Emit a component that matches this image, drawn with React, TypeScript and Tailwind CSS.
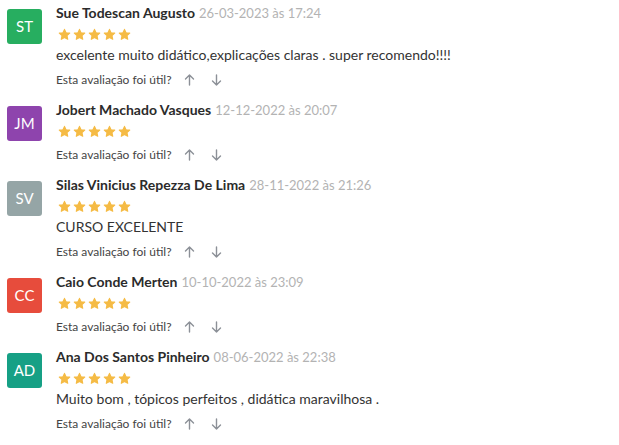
import React from 'react'

interface Review {
  initials: string
  color: string
  name: string
  date: string
  comment?: string
}

const reviews: Review[] = [
  { initials: 'ST', color: 'bg-[#27ae60]', name: 'Sue Todescan Augusto', date: '26-03-2023 às 17:24', comment: 'excelente muito didático,explicações claras . super recomendo!!!!' },
  { initials: 'JM', color: 'bg-[#8e44ad]', name: 'Jobert Machado Vasques', date: '12-12-2022 às 20:07' },
  { initials: 'SV', color: 'bg-[#95a5a6]', name: 'Silas Vinicius Repezza De Lima', date: '28-11-2022 às 21:26', comment: 'CURSO EXCELENTE' },
  { initials: 'CC', color: 'bg-[#e74c3c]', name: 'Caio Conde Merten', date: '10-10-2022 às 23:09' },
  { initials: 'AD', color: 'bg-[#16a085]', name: 'Ana Dos Santos Pinheiro', date: '08-06-2022 às 22:38', comment: 'Muito bom , tópicos perfeitos , didática maravilhosa .' },
]

function Star() {
  return (
    <svg className="w-[13px] h-[13px]" viewBox="0 0 24 24" fill="#f5bb45" stroke="#f5bb45" strokeWidth={2} strokeLinejoin="round">
      <path d="M12 2.5l2.9 6.3 6.8.7-5.1 4.6 1.4 6.8L12 17.4l-6 3.5 1.4-6.8-5.1-4.6 6.8-.7z" />
    </svg>
  )
}

function Arrow({ down }: { down?: boolean }) {
  return (
    <svg className="w-[11px] h-[12px]" viewBox="0 0 11 12" fill="none" stroke="#8c9097" strokeWidth={1.4} strokeLinecap="round" strokeLinejoin="round">
      {down ? (
        <path d="M5.5 1v10M1.5 7l4 4 4-4" />
      ) : (
        <path d="M5.5 11V1M1.5 5l4-4 4 4" />
      )}
    </svg>
  )
}

export default function App() {
  return (
    <div className="w-[619px] h-[445px] bg-white pl-[7px] pt-[3px] font-['Lato',sans-serif] overflow-hidden">
      {reviews.map((r) => (
        <div key={r.name} className="flex gap-[14px] pb-[10px]">
          <div className={`${r.color} mt-[6px] w-[35px] h-[35px] rounded-[3px] flex items-center justify-center text-white text-[15px] shrink-0`}>
            {r.initials}
          </div>
          <div className="flex flex-col">
            <div className="h-[20px] leading-[20px] flex items-baseline">
              <span className="text-[14px] font-bold text-[#2b2b2b]">{r.name}</span>
              <span className="ml-[4px] text-[13px] text-[#b3b3b3]">{r.date}</span>
            </div>
            <div className="h-[21px] flex items-center gap-[2px] ml-[2px] pt-[2px]">
              <Star />
              <Star />
              <Star />
              <Star />
              <Star />
            </div>
            {r.comment && (
              <div className="h-[22px] leading-[22px] text-[14px] text-[#333]">{r.comment}</div>
            )}
            <div className="mt-[4px] h-[20px] flex items-center text-[12px] text-[#444]">
              <span>Esta avaliação foi útil?</span>
              <span className="ml-[12px]"><Arrow /></span>
              <span className="ml-[16px]"><Arrow down /></span>
            </div>
          </div>
        </div>
      ))}
    </div>
  )
}
